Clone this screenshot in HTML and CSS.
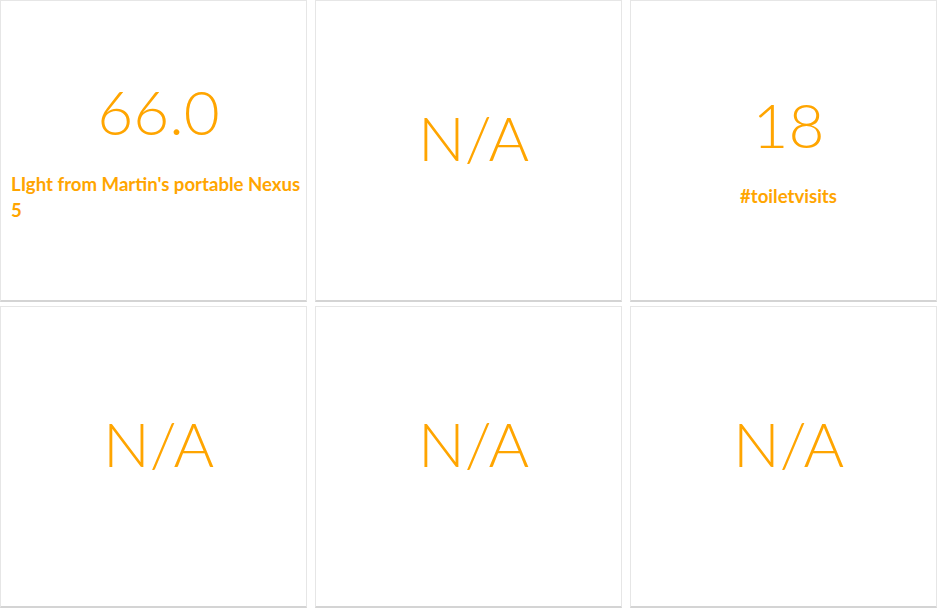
FILE: index.html
```html
<!DOCTYPE html>
<html>
<head>
<meta charset="utf-8">
<link rel="stylesheet" href="styles.css">
</head>
<body>
<div class="grid">
  <div class="tile">
    <div class="value">66.0</div>
    <div class="label">LIght from Martin's portable Nexus 5</div>
  </div>
  <div class="tile">
    <div class="value">N/A</div>
    <div class="label"></div>
  </div>
  <div class="tile">
    <div class="value">18</div>
    <div class="label">#toiletvisits</div>
  </div>
  <div class="tile">
    <div class="value">N/A</div>
    <div class="label"></div>
  </div>
  <div class="tile">
    <div class="value">N/A</div>
    <div class="label"></div>
  </div>
  <div class="tile">
    <div class="value">N/A</div>
    <div class="label"></div>
  </div>
</div>
</body>
</html>
```
FILE: styles.css
```css
html, body {
  margin: 0;
  padding: 0;
  background: #ffffff;
}
body {
  font-family: Lato, "Open Sans", sans-serif;
  color: #ffa500;
}
.grid {
  display: grid;
  grid-template-columns: repeat(3, 307px);
  grid-template-rows: repeat(2, 302px);
  column-gap: 8px;
  row-gap: 4px;
}
.tile {
  box-sizing: border-box;
  border: 1px solid #e6e6e6;
  border-bottom: 2px solid #d4d4d4;
  padding: 0 0 8px 10px;
  display: flex;
  flex-direction: column;
  justify-content: center;
  text-align: center;
}
.value {
  font-size: 62px;
  font-weight: 300;
  line-height: 80px;
  padding-left: 0;
  margin-top: 0;
}
.label {
  margin-top: 19px;
  font-size: 18.6px;
  font-weight: 700;
  line-height: 26px;
  text-align: center;
}
.tile:first-child .label {
  text-align: left;
  margin-top: 20px;
}
```
